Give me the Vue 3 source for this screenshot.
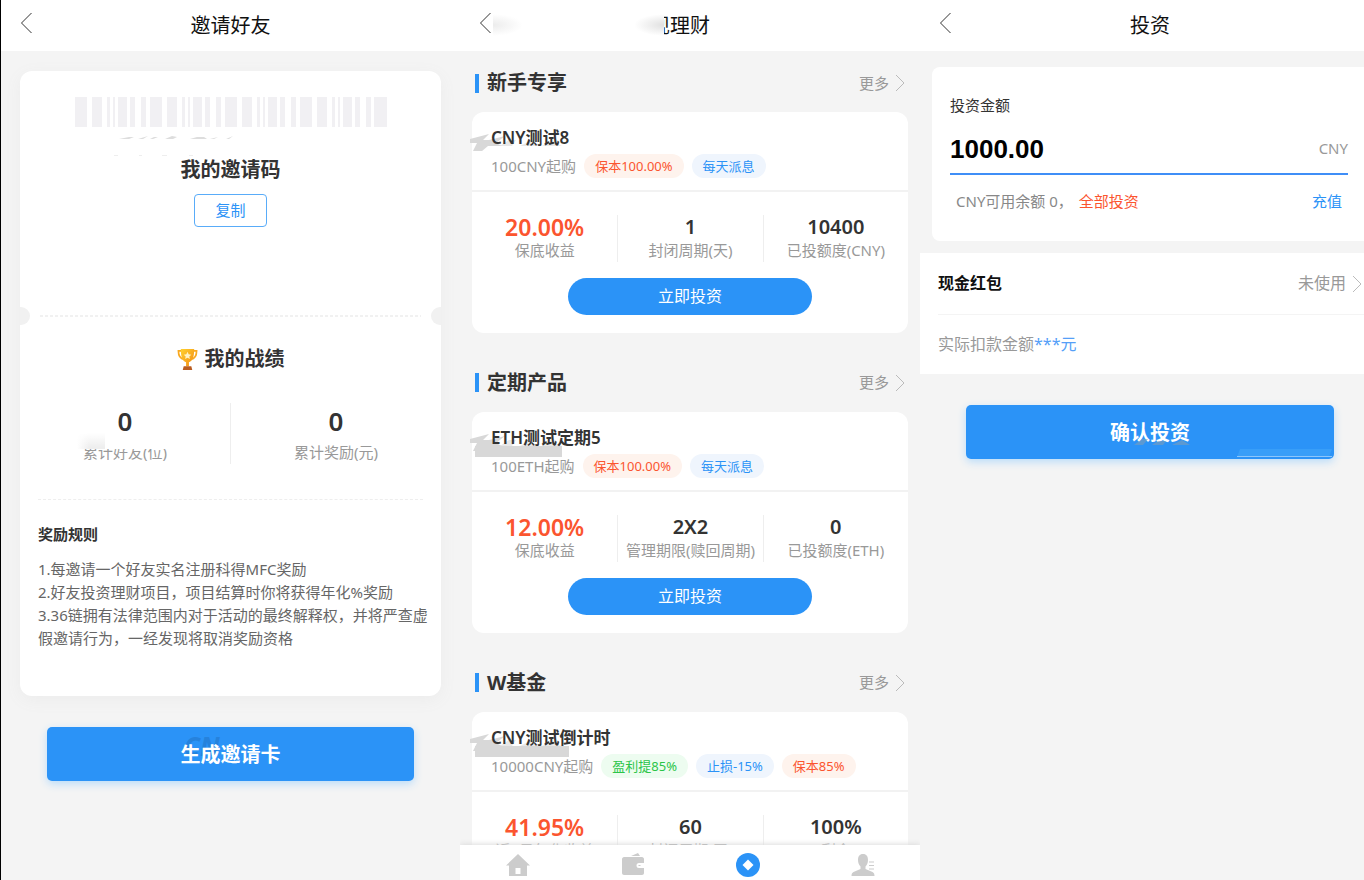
<template>
  <div class="board">
    <section class="phone invite">
      <header class="bar">
        <button class="back" aria-label="返回"><svg viewBox="0 0 12 22"><path d="M11.5 1 1.5 11l10 10" /></svg></button>
        <h1>邀请好友</h1>
      </header>
      <div class="ticket">
        <div class="code">
          <svg class="barcode" viewBox="0 0 312 30" aria-hidden="true">
            <rect v-for="(b, i) in bars" :key="i" :x="b.x" y="0" :width="b.w" height="30" />
          </svg>
          <svg class="scratch" viewBox="0 0 120 20" aria-hidden="true">
            <path d="M5 3l10-2h5l-5 2zM24 3l10-3-5 3zM36 3l4-2h4l-5 2zM51 3l7-3 5 1-4 2zM76 3l7-2h7l3 2zM96 3l8-2-4 2zM112 3l7-3-4 3z" />
            <path d="M0 19h4v1H0zM25 19h3v1h-3zM48 19h5v1h-5zM75 19h4v1h-4z" opacity=".5" />
          </svg>
          <h2>我的邀请码</h2>
          <button class="copy">复制</button>
        </div>
        <div class="tear"></div>
        <div class="score">
          <h2>
            <svg class="cup" viewBox="0 0 22 24">
              <defs>
                <linearGradient id="gold" x1="0" y1="0" x2="1" y2="1">
                  <stop offset="0" stop-color="#ffd12e" />
                  <stop offset="1" stop-color="#f38b13" />
                </linearGradient>
              </defs>
              <path d="M5 3H1.500c0 5 1.500 8 6 9M17 3h3.500c0 5-1.500 8-6 9" fill="none" stroke="#f9a91f" stroke-width="1.800" />
              <path d="M4 1h14c0 7-1 12-5.500 14v4h-3v-4C5 13 4 8 4 1z" fill="url(#gold)" />
              <path d="m11 4 1.200 2.600 2.800.3-2.100 1.900.6 2.800L11 10.200l-2.500 1.400.6-2.800L7 6.900l2.800-.3z" fill="#fff3c4" />
              <path d="M7 19h8l1 4H6z" fill="#b95c20" />
            </svg>
            我的战绩
          </h2>
          <dl class="totals">
            <div><dd>0</dd><dt class="worn">累计好友(位)</dt></div>
            <div><dd>0</dd><dt>累计奖励(元)</dt></div>
          </dl>
        </div>
        <div class="rules">
          <h3>奖励规则</h3>
          <p v-for="rule in rules" :key="rule">{{ rule }}</p>
        </div>
      </div>
      <button class="submit">
        <span class="mark" aria-hidden="true">CN</span>
        <span class="label">生成邀请卡</span>
      </button>
    </section>

    <section class="phone finance">
      <header class="bar">
        <button class="back" aria-label="返回"><svg viewBox="0 0 12 22"><path d="M11.5 1 1.5 11l10 10" /></svg></button>
        <h1>现理财</h1>
        <i class="haze haze-left"></i>
        <i class="haze haze-mid"></i>
      </header>
      <div v-for="group in groups" :key="group.title" class="group">
        <div class="group-head">
          <h2>{{ group.title }}</h2>
          <a href="#" class="more">更多<svg class="arrow" viewBox="0 0 10 18"><path d="m1 1 8 8-8 8" /></svg></a>
        </div>
        <article class="product">
          <div class="top">
            <svg class="brush" viewBox="0 0 100 24" aria-hidden="true">
              <path d="M0 6 19 1l-6 6h6L35 3l-9 7 6 3H18l-6 5H3l4-8H0z" />
              <path d="M30 13l9-6h7l-4 6zM50 13l10-5 8 5zM72 13l8-4 12 4z" opacity=".6" />
              <rect v-if="group.smear" x="5" y="13" :width="group.smear" height="11" />
            </svg>
            <h3>{{ group.name }}</h3>
            <div class="tags">
              <span class="from">{{ group.from }}</span>
              <span v-for="tag in group.tags" :key="tag.text" class="tag" :class="tag.tone">{{ tag.text }}</span>
            </div>
          </div>
          <dl class="stats">
            <div v-for="stat in group.stats" :key="stat.label">
              <dd>{{ stat.value }}</dd>
              <dt>{{ stat.label }}</dt>
            </div>
          </dl>
          <button class="invest">立即投资</button>
        </article>
      </div>
      <nav class="tabs">
        <a href="#" aria-label="首页"><svg viewBox="0 0 24 24"><path d="M12 1 0 12.500h3V23h18V12.500h3zM9.500 15h5v6h-5z" fill-rule="evenodd" /></svg></a>
        <a href="#" aria-label="钱包"><svg viewBox="0 0 24 24"><path d="M10 3l7-3 2 3zM1 6c0-1 1-2 2-2h18c1 0 2 1 2 2v4h-5a2.500 2.500 0 0 0 0 5h5v5c0 1-1 2-2 2H3c-1 0-2-1-2-2zM17.500 12h2v1h-2z" /></svg></a>
        <a href="#" class="on" aria-label="理财"><svg viewBox="0 0 24 24"><circle cx="12" cy="12" r="12" /><path d="m12 6.500 5.500 5.500-5.500 5.500L6.500 12z" fill="#fff" /></svg></a>
        <a href="#" aria-label="我的"><svg viewBox="0 0 24 24"><path d="M12 1c3.500 0 5 2.500 5 6 0 3-1 5-2.500 6.500V16l7 3c1.500.7 2 2 2 4H.5c0-2 .5-3.300 2-4l7-3v-2.500C8 12 7 10 7 7c0-3.500 1.500-6 5-6zM18 8.500h5v1h-5zM18 12h5v1h-5zM18 15.500h5v1h-5z" /></svg></a>
      </nav>
    </section>

    <section class="phone buy">
      <header class="bar">
        <button class="back" aria-label="返回"><svg viewBox="0 0 12 22"><path d="M11.5 1 1.5 11l10 10" /></svg></button>
        <h1>投资</h1>
      </header>
      <div class="amount">
        <label for="amount">投资金额</label>
        <div class="field">
          <input id="amount" v-model="amount" type="text">
          <span>CNY</span>
        </div>
        <div class="balance">
          <span>CNY可用余额 0，</span>
          <button class="all">全部投资</button>
          <a href="#">充值</a>
        </div>
      </div>
      <div class="bonus">
        <a href="#" class="bonus-row">
          <b>现金红包</b>
          <span>未使用<svg class="arrow" viewBox="0 0 10 18"><path d="m1 1 8 8-8 8" /></svg></span>
        </a>
        <p>实际扣款金额<em>***元</em></p>
      </div>
      <button class="submit">
        <span class="label">确认投资</span>
        <svg class="smudge" viewBox="0 0 230 30" aria-hidden="true">
          <path d="M30 16l8-6h6l-5 6zM48 16l6-4h8l-3 4zM68 16l10-5 8 5z" fill="#7d9cb8" opacity=".6" />
          <path d="M136 20h92l-3 8h-92z" fill="#389ef8" />
          <path d="M133 27h95v1h-95z" fill="#8cc6fb" />
        </svg>
      </button>
    </section>
  </div>
</template>

<script setup>
import { ref } from "vue";

const amount = ref("1000.00");

// one run of the strip; it repeats every 75 units
const pattern = [
  [0, 12], [17, 10], [32, 3], [38, 2], [43, 9], [55, 5], [66, 5],
];

const bars = [];
for (let i = 0; i < 4; i++) {
  pattern.forEach(([x, w]) => bars.push({ x: x + i * 75, w }));
}
bars.push({ x: 299, w: 13 });

const rules = [
  "1.每邀请一个好友实名注册科得MFC奖励",
  "2.好友投资理财项目，项目结算时你将获得年化%奖励",
  "3.36链拥有法律范围内对于活动的最终解释权，并将严查虚假邀请行为，一经发现将取消奖励资格",
];

const groups = [
  {
    title: "新手专享",
    name: "CNY测试8",
    from: "100CNY起购",
    smear: 0,
    tags: [
      { text: "保本100.00%", tone: "red" },
      { text: "每天派息", tone: "blue" },
    ],
    stats: [
      { value: "20.00%", label: "保底收益" },
      { value: "1", label: "封闭周期(天)" },
      { value: "10400", label: "已投额度(CNY)" },
    ],
  },
  {
    title: "定期产品",
    name: "ETH测试定期5",
    from: "100ETH起购",
    smear: 87,
    tags: [
      { text: "保本100.00%", tone: "red" },
      { text: "每天派息", tone: "blue" },
    ],
    stats: [
      { value: "12.00%", label: "保底收益" },
      { value: "2X2", label: "管理期限(赎回周期)" },
      { value: "0", label: "已投额度(ETH)" },
    ],
  },
  {
    title: "W基金",
    name: "CNY测试倒计时",
    from: "10000CNY起购",
    smear: 94,
    tags: [
      { text: "盈利提85%", tone: "green" },
      { text: "止损-15%", tone: "blue" },
      { text: "保本85%", tone: "red" },
    ],
    stats: [
      { value: "41.95%", label: "近7日年化收益" },
      { value: "60", label: "封闭周期(天)" },
      { value: "100%", label: "剩余" },
    ],
  },
];
</script>

<style>
body {
  overflow: hidden;
  background: #f4f4f4;
}
</style>

<style scoped>
* {
  box-sizing: border-box;
}

.board {
  display: grid;
  grid-template-columns: repeat(3, 1fr);
  width: calc(100% + 16px);
  height: 100vh;
  overflow: hidden;
  color: #333;
  font: 15px/23px "Noto Sans", "Noto Sans CJK SC", sans-serif;
}

h1, h2, h3, p, dl, dd {
  margin: 0;
}

button {
  padding: 0;
  border: 0;
  background: none;
  color: inherit;
  font: inherit;
}

a {
  color: inherit;
  text-decoration: none;
}

.phone {
  position: relative;
  display: flex;
  flex-direction: column;
  min-width: 0;
  min-height: 0;
  overflow: hidden;
  background: #f4f4f4;
}

.invite {
  border-left: 1px solid #000;
}

.bar {
  position: relative;
  display: flex;
  flex: none;
  align-items: center;
  justify-content: center;
  height: 51px;
  background: #fff;
}

.bar h1 {
  color: #111;
  font-size: 20px;
  font-weight: 400;
  line-height: 28px;
}

.back {
  position: absolute;
  top: 12px;
  left: 19px;
  width: 12px;
  height: 22px;
}

.back svg {
  display: block;
  fill: none;
  stroke: #333;
  stroke-width: 1;
}

.arrow {
  width: 10px;
  height: 18px;
  fill: none;
  stroke: #bbb;
}

/* invite */
.ticket {
  margin: 20px 19px 0;
  padding: 0 18px;
  border-radius: 12px;
  background: #fff;
  box-shadow: 0 4px 16px #ececec;
}

.code {
  display: flex;
  flex-direction: column;
  align-items: center;
  height: 236px;
  padding-top: 26px;
}

.barcode {
  width: 312px;
  height: 30px;
  fill: #f1f0f3;
}

.scratch {
  width: 120px;
  height: 20px;
  margin: 9px 113px 0 0;
  fill: #ddd;
}

.code h2, .score h2 {
  font-size: 20px;
  line-height: 28px;
}

.copy {
  width: 73px;
  height: 33px;
  margin-top: 10px;
  border: 1px solid #59acf9;
  border-radius: 4px;
  color: #2b93f7;
}

.tear {
  display: flex;
  align-items: center;
  justify-content: space-between;
  height: 18px;
  margin: 0 -18px;
  background: repeating-linear-gradient(90deg, #f1f1f1 0 3px, #fff 3px 5px) center / calc(100% - 40px) 2px no-repeat;
}

.tear::before, .tear::after {
  width: 10px;
  height: 18px;
  border-radius: 0 9px 9px 0;
  background: #f1f1f1;
  content: "";
}

.tear::after {
  border-radius: 9px 0 0 9px;
}

.score {
  padding-top: 20px;
}

.score h2 {
  display: flex;
  align-items: center;
  justify-content: center;
  gap: 7px;
}

.cup {
  width: 21px;
  height: 23px;
}

.totals {
  display: flex;
  margin: 30px -18px 35px;
}

.totals div {
  display: flex;
  flex: 1;
  flex-direction: column;
  align-items: center;
  height: 61px;
  padding-top: 2px;
}

.totals div + div {
  border-left: 1px solid #eee;
}

.totals dd {
  font-size: 26px;
  font-weight: 600;
  line-height: 32px;
}

.totals dt, .stats dt {
  color: #999;
}

.totals dt {
  position: relative;
  margin-top: 4px;
}

.worn::before {
  position: absolute;
  top: -8px;
  right: -54px;
  left: -6px;
  height: 16px;
  background:
    linear-gradient(#fff, #fff0 90%) left / 28px 16px no-repeat,
    linear-gradient(90deg, #fff, #eee 12px 28px, #fff 28px);
  content: "";
}

.rules {
  height: 197px;
  border-top: 1px dashed #eee;
  color: #666;
}

.rules h3 {
  margin: 23px 0 12px;
  color: #333;
  font-size: 15px;
}

.rules p {
  margin-right: -8px;
}

.submit {
  position: relative;
  flex: none;
  height: 54px;
  margin: 31px 46px 0;
  border-radius: 5px;
  background: #2b93f7;
  box-shadow: 0 3px 8px #b9dcfa;
  color: #fff;
  font-size: 20px;
  font-weight: 700;
}

.label {
  position: relative;
}

.mark {
  position: absolute;
  top: 8px;
  left: 137px;
  color: #2682dc;
  font-size: 26px;
  font-style: italic;
}

/* finance */
.finance h1 {
  margin-left: -20px;
}

.haze {
  position: absolute;
  top: 14px;
  width: 30px;
  height: 22px;
  background: radial-gradient(ellipse at left, #ececec, #fff0 70%);
}

.haze-left {
  left: 33px;
}

.haze-mid {
  left: 174px;
  background: radial-gradient(ellipse at right, #e0e0e0, #fff 70%);
}

.group {
  flex: none;
  padding: 0 12px;
}

.group-head {
  display: flex;
  align-items: center;
  justify-content: space-between;
  height: 61px;
  padding: 3px 3px 0;
}

.group + .group .group-head {
  height: 79px;
  padding-top: 20px;
}

.group-head h2 {
  display: flex;
  align-items: center;
  gap: 8px;
  font-size: 20px;
  line-height: 28px;
}

.group-head h2::before {
  width: 4px;
  height: 19px;
  background: #2b93f7;
  content: "";
}

.more {
  display: flex;
  align-items: center;
  gap: 6px;
  color: #999;
}

.product {
  height: 221px;
  border-radius: 12px;
  background: #fff;
}

.top {
  position: relative;
  height: 80px;
  padding: 12px 19px 0;
  border-bottom: 2px solid #f2f2f2;
}

.brush {
  position: absolute;
  top: 21px;
  left: -2px;
  width: 100px;
  height: 24px;
  fill: #d8d8d8;
}

.top h3 {
  position: relative;
  font-size: 17px;
  font-weight: 600;
  line-height: 28px;
}

.tags {
  position: relative;
  display: flex;
  align-items: center;
  gap: 8px;
  margin-top: 2px;
}

.from {
  color: #999;
}

.tag {
  padding: 0 11px;
  border-radius: 12px;
  font-size: 13px;
  line-height: 24px;
}

.red {
  background: #fef3ed;
  color: #fb552f;
}

.blue {
  background: #eff5fd;
  color: #2b93f7;
}

.green {
  background: #edfcf0;
  color: #2bc548;
}

.stats {
  display: grid;
  grid-template-columns: repeat(3, 1fr);
  height: 46px;
  margin: 23px 0 17px;
}

.stats div {
  text-align: center;
  white-space: nowrap;
}

.stats div + div {
  border-left: 1px solid #eee;
}

.stats dd {
  font-size: 20px;
  font-weight: 600;
  line-height: 24px;
}

.stats div:first-child dd {
  color: #fb552f;
  font-size: 23px;
}

.invest {
  display: block;
  width: 244px;
  height: 37px;
  margin: 0 auto;
  border-radius: 19px;
  background: #2b93f7;
  color: #fff;
  font-size: 16px;
}

.tabs {
  position: absolute;
  right: 0;
  bottom: 0;
  left: 0;
  display: flex;
  justify-content: space-around;
  height: 35px;
  padding-top: 8px;
  background: #fff;
  box-shadow: 0 -1px 5px #ddd;
}

.tabs svg {
  display: block;
  width: 24px;
  height: 24px;
  fill: #ccc;
}

.tabs .on svg {
  fill: #2b93f7;
}

/* buy */
.amount {
  height: 174px;
  margin: 16px 0 0 12px;
  padding: 27px 32px 0 18px;
  border-radius: 8px;
  background: #fff;
}

.amount label {
  display: block;
}

.field {
  display: flex;
  align-items: center;
  height: 58px;
  padding-top: 7px;
  border-bottom: 2px solid #3f8ef7;
  color: #999;
}

.field input {
  flex: 1;
  min-width: 0;
  padding: 0;
  border: 0;
  outline: 0;
  background: none;
  color: #000;
  font: 700 26px/32px "Liberation Sans", sans-serif;
}

.balance {
  display: flex;
  gap: 6px;
  padding: 15px 6px 0;
  color: #888;
}

.all {
  color: #fb552f;
}

.balance a {
  margin-left: auto;
  color: #2b93f7;
}

.bonus {
  height: 121px;
  margin-top: 12px;
  padding-left: 18px;
  background: #fff;
  color: #999;
  font-size: 16px;
}

.bonus-row {
  display: flex;
  align-items: center;
  justify-content: space-between;
  height: 62px;
  padding-right: 18px;
  border-bottom: 1px solid #f4f4f4;
}

.bonus-row b {
  color: #111;
}

.bonus-row span {
  display: flex;
  align-items: center;
  gap: 6px;
}

.bonus p {
  padding-top: 18px;
}

.bonus em {
  color: #559ff8;
  font-style: normal;
}

.smudge {
  position: absolute;
  right: 0;
  bottom: 0;
  width: 230px;
  height: 30px;
}
</style>
